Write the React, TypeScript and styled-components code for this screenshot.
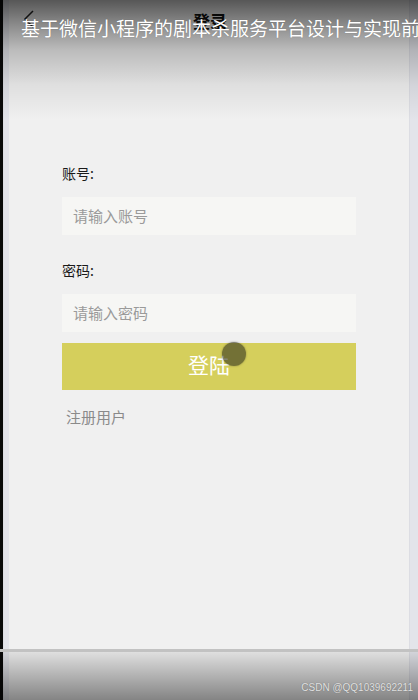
import React from "react";
import styled, { createGlobalStyle } from "styled-components";

const Global = createGlobalStyle`
  html, body { margin: 0; padding: 0; background: #f0f0f0; }
  body { font-family: "Liberation Sans", "Noto Sans CJK SC", sans-serif; }
  * { box-sizing: border-box; }
`;

const Screen = styled.div`
  position: relative;
  width: 418px;
  height: 700px;
  display: flex;
  overflow: hidden;
  background: #f0f0f0;
`;

const EdgeBlack = styled.div`
  width: 3px;
  background: #0a0a0a;
`;

const EdgeStrip = styled.div<{ $w: number }>`
  width: ${(p) => p.$w}px;
  background: #e3e4ea;
  border-left: 1px solid #dcdde3;
`;

const Main = styled.div`
  flex: 1;
  display: flex;
  flex-direction: column;
  background: #f0f0f0;
`;

const NavBar = styled.div`
  position: relative;
  height: 40px;
  display: flex;
  align-items: center;
  justify-content: center;
`;

const Back = styled.svg`
  position: absolute;
  left: 14px;
  top: 10px;
`;

const NavTitle = styled.div`
  font-size: 17px;
  font-weight: 700;
  color: #111;
  font-family: "Noto Sans CJK SC", sans-serif;
  margin-left: 2px;
`;

const Form = styled.div`
  display: flex;
  flex-direction: column;
  padding: 123px 53px 0 53px;
`;

const Label = styled.div<{ $mt?: number }>`
  font-size: 14px;
  line-height: 20px;
  color: #1a1a1a;
  margin-top: ${(p) => p.$mt ?? 0}px;
  font-family: "Noto Sans CJK SC", sans-serif;
`;

const Input = styled.div`
  margin-top: 14px;
  height: 38px;
  background: #f6f6f4;
  display: flex;
  align-items: center;
  padding: 0 0 2px 11px;
  font-size: 15px;
  color: #9a9a9a;
  font-family: "Noto Sans CJK SC", sans-serif;
`;

const Button = styled.div`
  position: relative;
  margin-top: 11px;
  height: 47px;
  background: #d5cf5c;
  display: flex;
  align-items: center;
  justify-content: center;
  padding-bottom: 6px;
  color: #fff;
  font-size: 21px;
  font-family: "Noto Sans CJK SC", sans-serif;
`;

const Touch = styled.div`
  position: absolute;
  left: 160px;
  top: -1px;
  width: 24px;
  height: 24px;
  border-radius: 50%;
  background: rgba(55, 55, 30, 0.62);
  box-shadow: 0 0 2px rgba(55, 55, 30, 0.5);
`;

const Register = styled.div`
  margin-top: 17px;
  padding-left: 4px;
  font-size: 15px;
  line-height: 20px;
  color: #8a8a8a;
  font-family: "Noto Sans CJK SC", sans-serif;
`;

const TopShade = styled.div`
  position: absolute;
  left: 0;
  top: 0;
  width: 418px;
  height: 120px;
  background: linear-gradient(
    rgba(0, 0, 0, 0.64) 0px,
    rgba(0, 0, 0, 0.42) 25px,
    rgba(0, 0, 0, 0.22) 50px,
    rgba(0, 0, 0, 0.07) 85px,
    rgba(0, 0, 0, 0) 120px
  );
  pointer-events: none;
`;

const Caption = styled.div`
  position: absolute;
  left: 21px;
  top: 16px;
  white-space: nowrap;
  font-size: 19px;
  line-height: 24px;
  color: #fff;
  font-family: "Noto Sans CJK SC", sans-serif;
  text-shadow: 0 0 1px rgba(0, 0, 0, 0.3);
`;

const BottomShade = styled.div`
  position: absolute;
  left: 0;
  bottom: 0;
  width: 418px;
  height: 51px;
  border-top: 3px solid #c2c2c2;
  background: linear-gradient(rgba(0, 0, 0, 0.07), rgba(0, 0, 0, 0.45));
  display: flex;
  align-items: flex-end;
  justify-content: flex-end;
  padding: 0 5px 6px 0;
`;

const Watermark = styled.div`
  font-size: 10px;
  line-height: 12px;
  color: #e2e2e2;
  font-family: "Liberation Sans", sans-serif;
  text-shadow: 0 0 1px rgba(0, 0, 0, 0.4);
`;

export default function App() {
  return (
    <>
      <Global />
      <Screen>
        <EdgeBlack />
        <EdgeStrip $w={6} />
        <Main>
          <NavBar>
            <Back width="14" height="20" viewBox="0 0 14 20">
              <polyline points="10,1 2,9 10,17" fill="none" stroke="#222" strokeWidth="1.5" />
            </Back>
            <NavTitle>登录</NavTitle>
          </NavBar>
          <Form>
            <Label>账号:</Label>
            <Input>请输入账号</Input>
            <Label $mt={25}>密码:</Label>
            <Input>请输入密码</Input>
            <Button>
              登陆
              <Touch />
            </Button>
            <Register>注册用户</Register>
          </Form>
        </Main>
        <EdgeStrip $w={9} />
        <TopShade>
          <Caption>基于微信小程序的剧本杀服务平台设计与实现前端</Caption>
        </TopShade>
        <BottomShade>
          <Watermark>CSDN @QQ1039692211</Watermark>
        </BottomShade>
      </Screen>
    </>
  );
}
